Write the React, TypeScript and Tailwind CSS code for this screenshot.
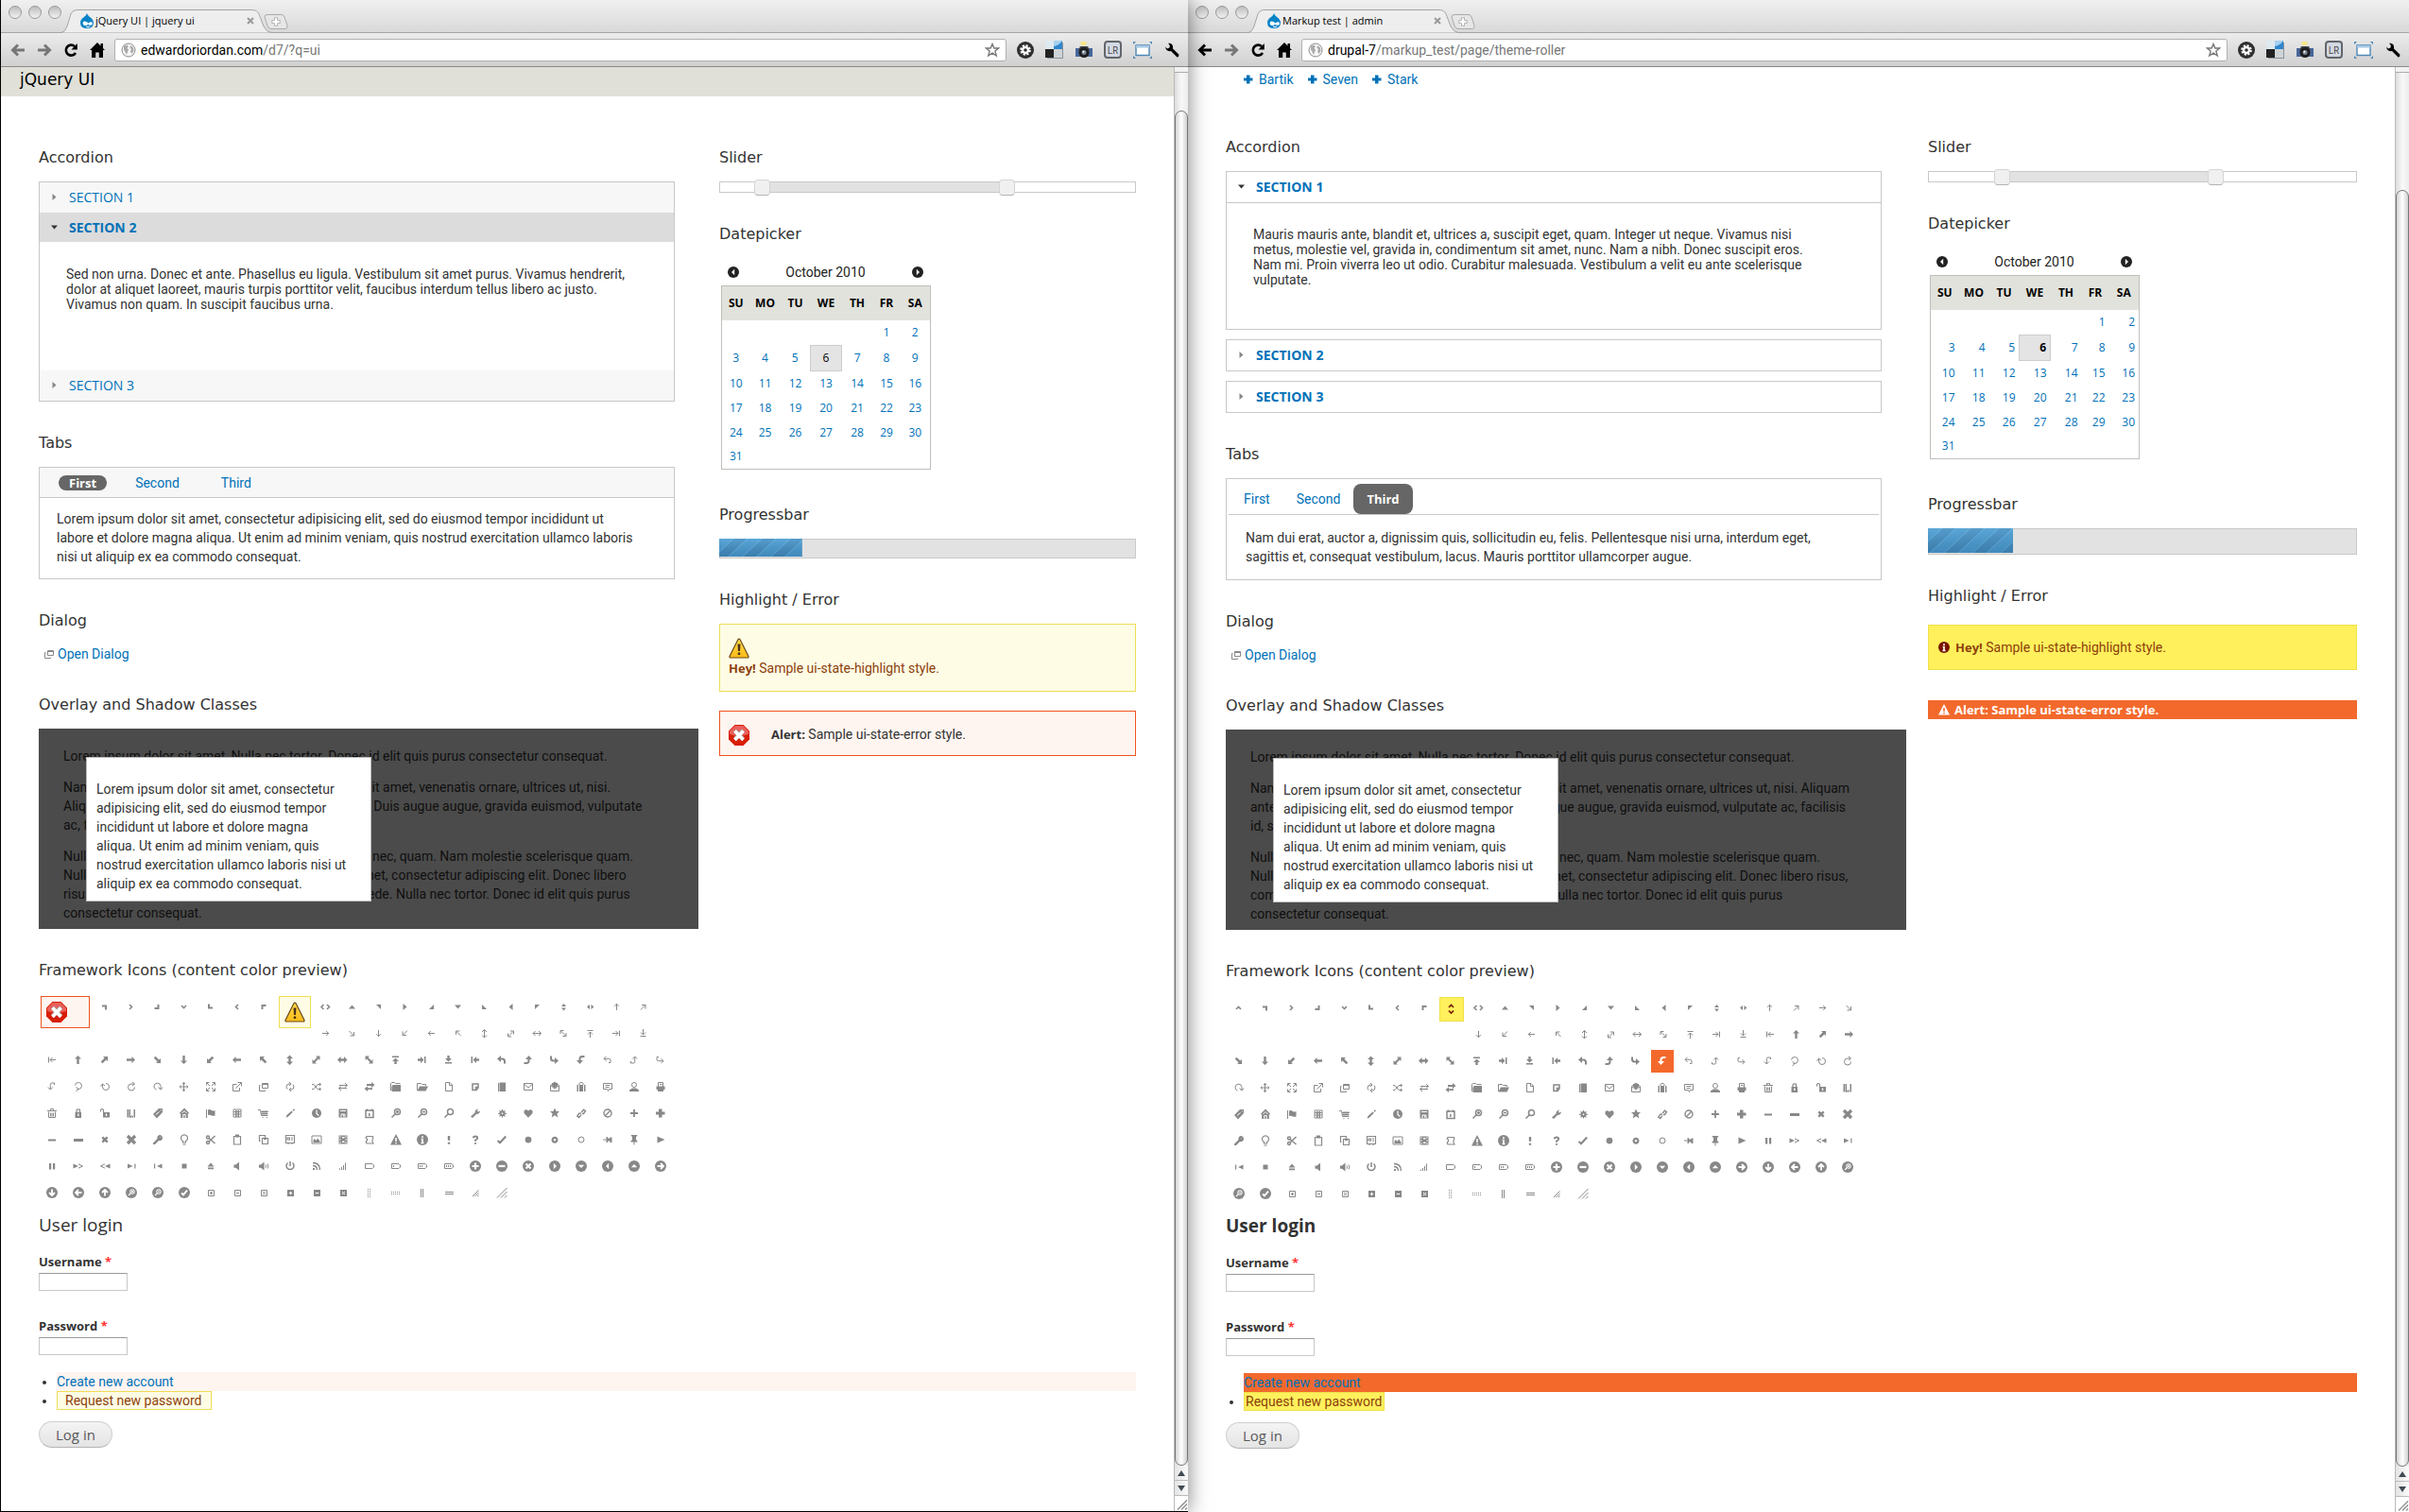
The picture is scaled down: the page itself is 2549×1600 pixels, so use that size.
import type { ReactNode } from "react";
import clsx from "clsx";

interface Glyph {
  fill?: string;
  line?: string;
  cut?: string;
  cutFill?: string;
  w?: number;
  turn?: number;
}

type Theme = "seven" | "bartik";

const NARROW = "font-['Open_Sans',sans-serif]";
const HEADING = "font-['DejaVu_Sans',sans-serif]";

const turns = (base: Glyph, angles: number[]): Glyph[] =>
  angles.map((turn) => ({ ...base, turn }));

// Straight and diagonal versions alternate clockwise from north
const compass = (straight: Glyph, diagonal: Glyph): Glyph[] =>
  [0, 90, 180, 270].flatMap((turn) => [
    { ...straight, turn },
    { ...diagonal, turn },
  ]);

const QUARTERS = [0, 90, 180, 270];
const DISC = "M8 2a6 6 0 1 0 0 12a6 6 0 1 0 0-12Z";

const CARAT: Glyph = { line: "M5 9L7.5 6.5L10 9", w: 1.6 };
const CARAT_NS: Glyph = { line: "M5 6L7.5 3.5L10 6M5 9.5L7.5 12L10 9.5", w: 1.6 };
const TRIANGLE: Glyph = { fill: "M4 9.5H11L7.5 5.5Z" };
const NEWWIN: Glyph = {
  line: "M6.5 4.5H12.5V9.5H6.5ZM6.5 5.5H12.5M4.5 6.5H3.5V12.5H9.5V11.5",
};
const RETURN_THICK: Glyph = {
  fill: "M3 6.5L7 3V5.5H8.5Q12 5.5 12 9V11.5H10V9.5Q10 7.5 8.5 7.5H7V10Z",
};
const PLUS_THICK: Glyph = { fill: "M6 3.5H9.5V6.5H12.5V9.5H9.5V12.5H6V9.5H3V6.5H6Z" };
const ALERT: Glyph = { fill: "M8 2L14 13.5H2Z", cut: "M8 6V10M8 11V12.3", w: 1.6 };
const INFO: Glyph = { fill: DISC, cut: "M8 4.2V6M6.7 7.5H8V11.5M6.5 11.5H9.5", w: 1.7 };
const DISC_EAST: Glyph = { fill: DISC, cutFill: "M6.8 4.8L10 8L6.8 11.2Z" };
const DISC_WEST: Glyph = { fill: DISC, cutFill: "M9.2 4.8L6 8L9.2 11.2Z" };

const GLYPHS: Glyph[] = [
  // carats
  ...compass(CARAT, { line: "M5 6.5H9V10.5", w: 2 }),
  CARAT_NS,
  { ...CARAT_NS, turn: 90 },
  // triangles
  ...compass(TRIANGLE, { fill: "M5 5H10V10Z" }),
  { fill: "M5 7L7.5 4L10 7ZM5 8.5H10L7.5 11.5Z" },
  { fill: "M7 5L4 7.5L7 10ZM8.5 5V10L11.5 7.5Z" },
  // arrows
  ...compass(
    { line: "M7.5 11V4M5 6.8L7.5 4.3L10 6.8" },
    { line: "M5 10.5L10 5.5M6 5.5H10V9.5" }
  ),
  { line: "M7.5 3.5V12M5 6L7.5 3.5L10 6M5 9.5L7.5 12L10 9.5" },
  { line: "M5 10.5L10 5.5M7 5H10.5V8.5M4.5 7.5V11H8" },
  { line: "M7.5 3.5V12M5 6L7.5 3.5L10 6M5 9.5L7.5 12L10 9.5", turn: 90 },
  { line: "M5 10.5L10 5.5M7 5H10.5V8.5M4.5 7.5V11H8", turn: 90 },
  ...turns({ line: "M4.5 4.5H10.5M7.5 12V6M5 8.5L7.5 6L10 8.5" }, QUARTERS),
  ...compass(
    { fill: "M7.5 3L11 6.5H8.7V12H6.3V6.5H4Z" },
    { fill: "M6 4H11V9L9.4 7.4L5.5 11.3L3.7 9.5L7.6 5.6Z" }
  ),
  { fill: "M7.5 2.5L11 6H8.7V9.5H11L7.5 13L4 9.5H6.3V6H4Z" },
  { fill: "M7 3.5H11.5V8L10 6.5L6.5 10L8 11.5H3.5V7L5 8.5L8.5 5Z" },
  { fill: "M7.5 2.5L11 6H8.7V9.5H11L7.5 13L4 9.5H6.3V6H4Z", turn: 90 },
  { fill: "M7 3.5H11.5V8L10 6.5L6.5 10L8 11.5H3.5V7L5 8.5L8.5 5Z", turn: 90 },
  ...turns({ fill: "M4 3.5H11V5H4ZM7.5 5.5L11 9H8.7V12H6.3V9H4Z" }, QUARTERS),
  ...turns(RETURN_THICK, QUARTERS),
  ...turns({ line: "M6.5 3.8L4 6.3L6.5 8.8M4.2 6.3H9.5Q11 6.3 11 8V10.5H9" }, QUARTERS),
  // refresh: partial rings with an arrow head
  { line: "M5.5 8L8 10.5L5.5 13M8 10.5H6.5M4.5 6.5A3.5 3.5 0 1 1 8 10.5" },
  { line: "M3.5 7.5L5.5 5L8 7M5.5 5V8A3.5 3.5 0 1 0 9 4.5" },
  { line: "M9 3L11.5 5L9 7M11 5H8A3.5 3.5 0 1 0 11.5 8.5" },
  { line: "M8.5 8.5L11 11L13 8.5M11 11V7.5A3.5 3.5 0 1 0 6.5 11" },
  // moving and windows
  {
    line: "M7.5 3.5V12.5M3 8H12M6 5L7.5 3.5L9 5M6 11L7.5 12.5L9 11M4.5 6.5L3 8L4.5 9.5M10.5 6.5L12 8L10.5 9.5",
  },
  {
    line: "M3.5 6.5V3.5H6.5M9.5 3.5H12.5V6.5M12.5 9.5V12.5H9.5M6.5 12.5H3.5V9.5M4 4L7 7M12 4L9 7M4 12L7 9M12 12L9 9",
  },
  { line: "M7.5 5.5H3.5V12.5H10.5V9M6.5 9.5L12 4M8.5 3.5H12.5V7.5" },
  NEWWIN,
  { line: "M7 3L9 5L7 7M9 5H7Q4 5 4 8.5L5 10.5M9 9L7 11L9 13M7 11H9Q12 11 12 8L11 5.5" },
  { line: "M3 5.5H5L9 10.5H12.5M3 10.5H5L9 5.5H12.5M11 4L12.5 5.5L11 7M11 9L12.5 10.5L11 12" },
  { line: "M4 6.5H12.5M10 4L12.5 6.5L10 8.5M12 9.5H3.5M6 7.5L3.5 9.5L6 12" },
  { fill: "M5 5H10V3L13.5 6L10 9V7H5ZM11 9.2V11H6V13L2.5 10L6 7.5V9.2Z" },
  // files and mail
  { line: "M2.5 12V4.5L3.5 3.5H6.5L7.5 4.5H12.5", fill: "M4.5 6H13V13H3.5V8Z" },
  { line: "M2.5 12V4.5H6.5L7.5 5.5H11.5V7", fill: "M5 7.5H14L11.5 12.5H2.5Z" },
  { line: "M4.5 3.5H9L11.5 6V12.5H4.5ZM8.5 4V6.5H11" },
  { line: "M5 5H11V9L9 11.5H5ZM8.5 11V8.5H11", w: 1.5 },
  { fill: "M5.5 3.5H12V13H5.5Z", line: "M4.5 4V13", w: 1 },
  { line: "M3.5 4.5H12.5V11.5H3.5ZM4 5.5L8 9L12 5.5" },
  { line: "M3.5 6.5V12.5H12.5V6.5L8 3ZM4 7L8 10L12 7", fill: "M5 4H11V7L8 9.5L5 7Z" },
  { line: "M6 6V4.5Q6 3.5 8 3.5Q10 3.5 10 4.5V6", fill: "M3.5 6H5V13H3.5ZM6 6H10V13H6ZM11 6H12.5V13H11Z" },
  { line: "M3.5 4.5H12.5V10.5H9.5L8.5 12.5L7.5 10.5H3.5ZM5.5 6.5H10.5M5.5 8.5H9.5" },
  { line: "M8 3.5A2.4 2.4 0 1 0 8 8.5A2.4 2.4 0 1 0 8 3.5", fill: "M3 13V11.5L6 9.5H10L13 11.5V13Z" },
  { line: "M5.5 8V3.5H10.5V8M7 5.5H9.5", fill: "M3.5 7.5H12.5V11H11V13H5V11H3.5Z" },
  { line: "M3 5.5H13M6.5 5V3.5H9.5V5M4.5 6.5V12.5H11.5V6.5M6.5 7.5V11.5M8 7.5V11.5M9.5 7.5V11.5" },
  { line: "M6 7V5Q6 3.8 7.8 3.8T9.5 5V7", fill: "M4.5 7H11V13H4.5Z", cut: "M7.8 8.5V11", w: 1.4 },
  { line: "M3.5 6.5V4.5Q5 2.5 6.5 4.5V7", fill: "M6 7H13V12.5H6Z", cut: "M9.5 8.5V11", w: 1.4 },
  { fill: "M3.5 4H5.5V12.5H3.5ZM10.5 4H12V12.5H10.5Z", line: "M6.5 4V12.5L8.5 10.5L10 12M7 12H10" },
  // objects
  { fill: "M3 9L9 3H13V7L7 13.5Z", cut: "M6 9.5L9.5 6.5M10.8 4.8H11.8", w: 1 },
  { fill: "M8 2.5L13.5 8.2H11.8V13H4.2V8.2H2.5Z", cut: "M5.5 8L8 5.5L10.5 8M6.8 13V9.5H9.2V13", w: 1 },
  { line: "M3.5 4V13", fill: "M5 4.5Q7 3.5 8.5 4.8T12.5 5V10.5Q10 11.2 8.5 10.3T5 10Z" },
  { line: "M4 4H12V12H4ZM4 6.5H12M4 9H12M6.5 5V12M9.5 5V12M8 5V12" },
  { line: "M2 4.5H4.5L5.5 10.5H12.5M5 6.5H13M5.3 8.5H12.5M7 5V10M9 5V10M11 5V10M6.5 12.5H7.5M11 12.5H12" },
  { fill: "M3.5 12.5L4.5 10L9.5 5.5L10.8 6.7L5.8 11.7ZM10.5 4.7L12 3.3L13 4.3L11.7 5.8Z" },
  { fill: "M8 3a5 5 0 1 0 0 10a5 5 0 1 0 0-10Z", cut: "M8 4.5V8.5L10.3 10.5", w: 1.2 },
  { fill: "M3.5 3.5H12.5V12.5H3.5Z", cut: "M5 5.5H11M6 12V9H10V12M8.5 9.5V11.5", w: 1 },
  { line: "M4 5H12V12.5H4ZM5.5 3.5V6M10.5 3.5V6M7.8 8V11", w: 1.5 },
  { line: "M9.5 3.5A3 3 0 1 0 9.5 9.5A3 3 0 1 0 9.5 3.5M7.3 8.7L3.5 12.5M8 6.5H11M9.5 5V8", w: 1.5 },
  { line: "M9.5 3.5A3 3 0 1 0 9.5 9.5A3 3 0 1 0 9.5 3.5M7.3 8.7L3.5 12.5M8 6.5H11", w: 1.5 },
  { line: "M9.5 3.5A3 3 0 1 0 9.5 9.5A3 3 0 1 0 9.5 3.5M7.3 8.7L3.5 12.5", w: 1.5 },
  { fill: "M3 11.5L7.5 7.5Q7.5 4 11 3.5L9.8 5.5L11 6.5L13 5.5Q12.5 9 9 9L5 13Z" },
  { line: "M8.5 4V12.5M4.2 8.3H12.8M5.5 5.3L11.5 11.3M11.5 5.3L5.5 11.3", fill: "M8.5 5.3a3 3 0 1 0 0 6a3 3 0 1 0 0-6Z", cut: "M7.7 8.3H9.3", w: 1.6 },
  { fill: "M8 12.8L3.5 8V5.5Q5.5 3 8 5.5Q10.5 3 12.5 5.5V8Z" },
  { fill: "M8 2.5L9.6 6H13L10.4 8.5L11.3 12.5L8 10.3L4.7 12.5L5.6 8.5L3 6H6.4Z" },
  { line: "M8.3 7L10.5 4.2L12.5 5.6L10.5 8.5L8.8 8.5M7.8 8L5.8 8.2L3.8 11L5.8 12.5L8 9.6", w: 1.4 },
  { line: "M8 4A4 4 0 1 0 8 12A4 4 0 1 0 8 4M5.5 10.5L10.5 5.5", w: 1.4 },
  { line: "M8 4V12M4 8H12", w: 1.8 },
  PLUS_THICK,
  { fill: "M4 7.5H12V9.5H4Z" },
  { fill: "M3 7H13V10H3Z" },
  { line: "M5.3 5.3L10.7 10.7M10.7 5.3L5.3 10.7", w: 2.4 },
  { line: "M4 4L12 12M12 4L4 12", w: 3.2 },
  { fill: "M10.5 3A3 3 0 0 0 7.5 7L3 11.5V13H5L9 9A3 3 0 0 0 13 6A3 3 0 0 0 10.5 3Z", cut: "M10.7 5.2L11 5.5", w: 1.2 },
  { line: "M6.5 9.5A3.5 3.5 0 1 1 9.5 9.5V11H6.5ZM6.5 13H9.5", w: 1.2 },
  { line: "M5 4A1.5 1.5 0 1 0 5 7A1.5 1.5 0 1 0 5 4M5 9.5A1.5 1.5 0 1 0 5 12.5A1.5 1.5 0 1 0 5 9.5M6.3 6.8L12.5 12M6.3 9.7L12.5 4", w: 1.5 },
  { line: "M4.5 4.5H11.5V13H4.5Z", fill: "M6 2.5H10V5.5H6Z", w: 1.2 },
  { line: "M4.5 9.5H3.5V3.5H9.5V5M6.5 6.5H12.5V12.5H6.5Z", fill: "M8 5.5H11V8H8Z", w: 1.2 },
  { line: "M3.5 3.5H12.5V11.5H3.5ZM5 6H7.5V8H5ZM9 6H11M9 8H11M6 12V13M10 12V13", w: 1.1 },
  { line: "M3 4H13V12H3Z", fill: "M4.5 11V8.5L6 7L7.5 9L9 6.5L11.5 9.5V11Z" },
  { fill: "M3.5 3.5H12.5V12.5H3.5Z", cut: "M4.5 5H5.5M4.5 8H5.5M4.5 11H5.5M10.5 5H11.5M10.5 8H11.5M10.5 11H11.5M7 5.8H9.5M7 10.2H9.5", w: 1.4 },
  { line: "M5 4.5H11.5Q12.5 6 11 8Q10.5 10 12 12H5Q3.5 10.5 5.5 8.5Q6 6.5 4 6Z", w: 1.2 },
  ALERT,
  INFO,
  { line: "M8 4V8.8M8 10.8V12.8", w: 2.4 },
  { line: "M5.8 6.2Q5.8 4.5 8 4.5T10.2 6.3Q10 7.5 8 8.5V9.7M8 11V12.8", w: 1.9 },
  { line: "M3.5 9L6 11.3L12.2 4.5", w: 2.1 },
  { fill: "M8 4.7a3.4 3.4 0 1 0 0 6.8a3.4 3.4 0 1 0 0-6.8Z" },
  { line: "M8 5.8A2.4 2.4 0 1 0 8 10.6A2.4 2.4 0 1 0 8 5.8", w: 2.2 },
  { line: "M8 5A3 3 0 1 0 8 11A3 3 0 1 0 8 5", w: 1 },
  { line: "M3 8H6.5", fill: "M6.5 5H8V6.5H10.5V5.5H12.5V11H10.5V9.5H8V11H6.5Z" },
  { line: "M8 10V13.5", fill: "M4.8 3H11.2V4.5H10V8L11.5 9.5V10.5H4.5V9.5L6 8V4.5H4.8Z" },
  // media
  { fill: "M4.5 4.5L12.5 8L4.5 11.5Z" },
  { fill: "M5 5H7.2V11.5H5ZM9 5H11.2V11.5H9Z" },
  { fill: "M2.5 5.5L8 8L2.5 10.5Z", line: "M8 5.8L12.5 8L8 10.2" },
  { fill: "M13.5 5.5L8 8L13.5 10.5Z", line: "M8 5.8L3.5 8L8 10.2" },
  { fill: "M4 5.5L9.5 8L4 10.5ZM11.3 5.5H12.5V10.5H11.3Z" },
  { fill: "M12.5 5.5L7 8L12.5 10.5ZM4 5.5H5.2V10.5H4Z" },
  { fill: "M5.5 5.5H10.5V10.5H5.5Z" },
  { fill: "M8 4.5L11.5 8.5H4.5ZM5 9.5H11V11.3H5Z" },
  { fill: "M4.5 6.5H6.5L10 3.5V12.5L6.5 9.8H4.5Z" },
  { fill: "M3 6.5H5L8.5 3.5V12.5L5 9.8H3Z", line: "M10 6.5Q11 8 10 9.8M12 5.5Q13.8 8 12 10.5" },
  { line: "M5.5 4.5A4 4 0 1 0 10.5 4.5M8 3V8", w: 1.5 },
  { line: "M4 4.5Q11.5 4.5 11.5 12M4 7.5Q8.5 7.5 8.5 12", fill: "M4 10H6V12H4Z", w: 1.3 },
  { line: "M4.5 10.5V12M6.5 9V12M8.5 7V12M10.5 4.5V12" },
  { line: "M3.5 5.5H11L12.5 7V9L11 10.5H3.5Z" },
  { line: "M3.5 5.5H11L12.5 7V9L11 10.5H3.5ZM5.5 7V9" },
  { line: "M3.5 5.5H11L12.5 7V9L11 10.5H3.5ZM5.5 7V9M7.5 7V9" },
  { line: "M3.5 5.5H11L12.5 7V9L11 10.5H3.5ZM5.5 7V9M7.5 7V9M9.5 7V9" },
  // discs
  { fill: DISC, cut: "M8 4.5V11.5M4.5 8H11.5", w: 2.2 },
  { fill: DISC, cut: "M4.5 8H11.5", w: 2.2 },
  { fill: DISC, cut: "M5.5 5.5L10.5 10.5M10.5 5.5L5.5 10.5", w: 2.2 },
  DISC_EAST,
  { fill: DISC, cutFill: "M4.8 6.8H11.2L8 10Z" },
  DISC_WEST,
  { fill: DISC, cutFill: "M4.8 9.2H11.2L8 6Z" },
  { fill: DISC, cut: "M4.5 8H10.5M8 5L11 8L8 11", w: 1.8 },
  { fill: DISC, cut: "M8 4.5V10.5M5 8L8 11L11 8", w: 1.8 },
  { fill: DISC, cut: "M11.5 8H5.5M8 5L5 8L8 11", w: 1.8 },
  { fill: DISC, cut: "M8 11.5V5.5M5 8L8 5L11 8", w: 1.8 },
  { fill: DISC, cut: "M9 4.8A2.2 2.2 0 1 0 9 9.2A2.2 2.2 0 1 0 9 4.8M7 9L5 11M8 7H10M9 6V8", w: 1.1 },
  { fill: DISC, cut: "M9 4.8A2.2 2.2 0 1 0 9 9.2A2.2 2.2 0 1 0 9 4.8M7 9L5 11M8 7H10", w: 1.1 },
  { fill: DISC, cut: "M5 8.5L7 10.3L11 5.7", w: 2 },
  { line: "M5.5 5.5H11.5V11.5H5.5ZM8.5 7V10M7 8.5H10" },
  { line: "M5.5 5.5H11.5V11.5H5.5ZM7 8.5H10" },
  { line: "M5.5 5.5H11.5V11.5H5.5ZM7 7L10 10M10 7L7 10" },
  { fill: "M5 5H12V12H5Z", cut: "M8.5 6.8V10.2M6.8 8.5H10.2" },
  { fill: "M5 5H12V12H5Z", cut: "M6.8 8.5H10.2" },
  { fill: "M5 5H12V12H5Z", cut: "M7 7L10 10M10 7L7 10" },
  // grips
  { fill: "M6 4h1v1h-1zM8 4h1v1h-1zM6 6h1v1h-1zM8 6h1v1h-1zM6 8h1v1h-1zM8 8h1v1h-1zM6 10h1v1h-1zM8 10h1v1h-1zM6 12h1v1h-1zM8 12h1v1h-1z" },
  { fill: "M3 7h1v1h-1zM3 9h1v1h-1zM5 7h1v1h-1zM5 9h1v1h-1zM7 7h1v1h-1zM7 9h1v1h-1zM9 7h1v1h-1zM9 9h1v1h-1zM11 7h1v1h-1zM11 9h1v1h-1z" },
  { line: "M6.5 4V13M8.5 4V13" },
  { line: "M4 7.5H13M4 9.5H13" },
  { line: "M5 12L11.5 5.5M7.5 12L11.5 8M10 12L11.5 10.5" },
  { line: "M3 13.5L13.5 3M7 13.5L13.5 7M11 13.5L13.5 11" },
];

const CARAT_NORTH_INDEX = 0;
const CARAT_NS_INDEX = 8;
const RETURN_SOUTH_INDEX = 55;

function Icon({ glyph, className }: { glyph: Glyph; className?: string }) {
  const width = glyph.w ?? 1;
  return (
    <svg viewBox="0 0 16 16" className={clsx("size-4 shrink-0", className)} aria-hidden="true">
      <g transform={glyph.turn ? `rotate(${glyph.turn} 7.5 7.5)` : undefined}>
        {glyph.fill && <path d={glyph.fill} fill="currentColor" />}
        {glyph.line && (
          <path d={glyph.line} fill="none" stroke="currentColor" strokeWidth={glyph.cut ? 1.2 : width} />
        )}
        {glyph.cut && <path d={glyph.cut} fill="none" stroke="#fff" strokeWidth={width} />}
        {glyph.cutFill && <path d={glyph.cutFill} fill="#fff" />}
      </g>
    </svg>
  );
}

function WarningSign() {
  return (
    <svg viewBox="0 0 22 22" className="size-[22px] shrink-0" aria-hidden="true">
      <defs>
        <linearGradient id="warn" x1="0" y1="0" x2="0" y2="1">
          <stop offset="0" stopColor="#ffdc4c" />
          <stop offset="1" stopColor="#fbb917" />
        </linearGradient>
      </defs>
      <path
        d="M11 1.2Q11.8 1.2 12.2 2L21 19.4Q21.3 21 20 21H2Q.7 21 1 19.4L9.8 2Q10.2 1.2 11 1.2Z"
        fill="url(#warn)"
        stroke="#6b4a1c"
        strokeWidth="1.2"
      />
      <path d="M9.5 6.5H12.5L12 14H10Z" fill="#4a3218" />
      <path d="M9.8 15.5H12.2V18H9.8Z" fill="#4a3218" />
    </svg>
  );
}

function StopSign() {
  return (
    <svg viewBox="0 0 22 22" className="size-[22px] shrink-0" aria-hidden="true">
      <path d="M6.5 0H15.5L22 6.5V15.5L15.5 22H6.5L0 15.5V6.5Z" fill="#d81e05" />
      <path d="M6.8 1H15.2L21 6.8V10Q11 13 1 10V6.8Z" fill="#e8605c" />
      <path d="M6.5 6L15.5 15.5M15.5 6L6.5 15.5" stroke="#a9a9a9" strokeWidth="4.6" />
      <path d="M6.5 6.5L15.5 16M15.5 6.5L6.5 16" stroke="#fff" strokeWidth="3.4" />
    </svg>
  );
}

function BrowserTab({ title }: { title: string }) {
  return (
    <div className="relative flex h-6 w-[222px] items-center self-end pl-[19px] pr-[18px]">
      <svg viewBox="0 0 224 25" preserveAspectRatio="none" className="absolute inset-x-0 top-0 h-[25px] w-full" aria-hidden="true">
        <path
          d="M0 24.5Q4 24 6 18L10 5Q12 .5 16 .5H204Q209 .5 211 5L216 18Q219 24 224 24.5"
          fill="#eeeeee"
          stroke="#a5a5a5"
        />
      </svg>
      <svg viewBox="0 0 16 16" className="relative size-4" aria-hidden="true">
        <path d="M8 0Q8.5 2 11 4Q15 6.5 15 10.5Q14.5 16 8 16Q1 16 1 10Q1 6.5 5 4Q7.5 2.5 8 0Z" fill="#0b84c6" />
        <path d="M5 8.5Q8 8.5 9.5 10.5Q12 8.5 13.5 9.5Q14.5 12.5 12 12.8Q10 12.8 9.3 11.8Q7 14 4.5 12.5Q2.5 10 5 8.5Z" fill="#fff" />
        <path d="M7 14Q9 15.2 11 14" stroke="#fff" fill="none" />
      </svg>
      <span className={clsx("relative flex-1 pl-px text-[11px] text-black", NARROW)}>{title}</span>
      <button type="button" aria-label="Close tab" className="relative text-[#999]">
        <svg viewBox="0 0 8 8" className="size-2" aria-hidden="true">
          <path d="M1 1L7 7M7 1L1 7" stroke="currentColor" strokeWidth="2" />
        </svg>
      </button>
    </div>
  );
}

function Toolbar({ host, path, canGoBack }: { host: string; path: string; canGoBack: boolean }) {
  const button = "flex w-7 justify-center";
  return (
    <div className="flex h-9 items-center border-b border-[#8a8a8a] bg-linear-to-b from-[#ececec] to-[#d0d0d0] pl-1 pr-0.5 text-black">
      <button type="button" aria-label="Back" className={clsx(button, canGoBack ? "text-black" : "text-[#777]")}>
        <svg viewBox="0 0 16 16" className="size-4" aria-hidden="true">
          <path d="M15 8H3M8 2.5L2.5 8L8 13.5" stroke="currentColor" strokeWidth="3" fill="none" />
        </svg>
      </button>
      <button type="button" aria-label="Forward" className={clsx(button, "text-[#777]")}>
        <svg viewBox="0 0 16 16" className="size-4" aria-hidden="true">
          <path d="M1 8H13M8 2.5L13.5 8L8 13.5" stroke="currentColor" strokeWidth="3" fill="none" />
        </svg>
      </button>
      <button type="button" aria-label="Reload" className={button}>
        <svg viewBox="0 0 16 16" className="size-4" aria-hidden="true">
          <path d="M13 11A5.5 5.5 0 1 1 12 4" stroke="currentColor" strokeWidth="2.6" fill="none" />
          <path d="M14.8 1V7.5H8.5Z" fill="currentColor" />
        </svg>
      </button>
      <button type="button" aria-label="Home" className={button}>
        <svg viewBox="0 0 16 16" className="size-4" aria-hidden="true">
          <path d="M8 0L11.5 3.5V1H14V6L16 8H14V16H9.8V10.5H6.2V16H2V8H0Z" fill="currentColor" />
        </svg>
      </button>
      <div className="ml-1 flex h-6 flex-1 items-center rounded-[3px] border border-[#b0b0b0] bg-white px-1.5">
        <svg viewBox="0 0 16 16" className="size-4" aria-hidden="true">
          <circle cx="8" cy="8" r="7" fill="#f6f6f6" stroke="#8a8a8a" />
          <path d="M3 4L6 2.5L8 4L6.5 6L8 7.5L7 10L6 13L4.5 10L3 7.5ZM10 3L13 5.5L13.5 9L11.5 12L10 9.5L11 7L9.5 5.5Z" fill="#a9a9a9" />
        </svg>
        <span className="flex-1 pl-[5px] text-[#777]">
          <span className="text-black">{host}</span>
          {path}
        </span>
        <button type="button" aria-label="Bookmark this page" className="text-[#777]">
          <svg viewBox="0 0 16 16" className="size-4" aria-hidden="true">
            <path d="M8 1.5L9.9 6H14.7L10.9 9L12.2 14L8 11.2L3.8 14L5.1 9L1.3 6H6.1Z" fill="none" stroke="currentColor" strokeWidth="1.4" />
          </svg>
        </button>
      </div>
      <div className="ml-1 flex *:flex *:w-[31px] *:items-center *:justify-center">
        <button type="button" aria-label="Settings">
          <svg viewBox="0 0 18 18" className="size-[18px]" aria-hidden="true">
            <circle cx="9" cy="9" r="9" fill="#2f2f2f" />
            <circle cx="9" cy="9" r="4.8" fill="none" stroke="#fff" strokeWidth="2" strokeDasharray="2.2 1.55" />
            <circle cx="9" cy="9" r="3" fill="none" stroke="#fff" strokeWidth="2.4" />
          </svg>
        </button>
        <button type="button" aria-label="Delicious">
          <svg viewBox="0 0 20 20" className="size-5" aria-hidden="true">
            <path d="M2 2H19V19H2Z" fill="#8d9399" />
            <path d="M0 0H9V9H0Z" fill="#dfe9f0" />
            <path d="M9 0H18V9H9Z" fill="#2f86cc" />
            <path d="M9 0H18Q15 5 9 6Z" fill="#a6d0ee" />
            <path d="M0 9H9V18H0Z" fill="#222" />
            <path d="M9 9H18V18H9Z" fill="#ced3d7" />
          </svg>
        </button>
        <button type="button" aria-label="Screenshot">
          <svg viewBox="0 0 20 18" className="h-[18px] w-5" aria-hidden="true">
            <path d="M6 0H13L12 4H7Z" fill="#f5e58a" />
            <path d="M1 7H19V16H1Z" fill="#48679c" />
            <path d="M6 5H14L16 9H4Z" fill="#42454c" />
            <circle cx="10" cy="11.5" r="5.5" fill="#1d1d1f" />
            <circle cx="10" cy="11.5" r="2.5" fill="#7d8894" />
            <circle cx="9.3" cy="10.8" r="1" fill="#fff" />
          </svg>
        </button>
        <button type="button" aria-label="LR">
          <span className={clsx("flex size-[19px] items-center justify-center rounded-sm border-2 border-[#62656b] bg-[#d3d9e2] text-[10px] leading-none text-[#444]", NARROW)}>
            LR
          </span>
        </button>
        <button type="button" aria-label="Resize window">
          <svg viewBox="0 0 20 18" className="h-[18px] w-5" aria-hidden="true">
            <path d="M3 4H17V14.5H3Z" fill="#fff" stroke="#4d87b6" strokeWidth="1.4" />
            <path d="M3 4H17V6.5H3Z" fill="#a5c7e4" />
            <path d="M0 3V0H3ZM17 0H20V3ZM0 15V18H3ZM20 15V18H17Z" fill="#4d87b6" />
          </svg>
        </button>
        <button type="button" aria-label="Customize">
          <svg viewBox="0 0 16 16" className="size-4" aria-hidden="true">
            <path d="M1 4.5L3 6.5L5.5 5.5L5.8 3L4 .8Q8 .3 9 4L9 6.5L15.2 12.5Q16 15 13.5 15.5L7 9Q2 10 1 4.5Z" fill="#000" />
          </svg>
        </button>
      </div>
    </div>
  );
}

function Scrollbar({ offset }: { offset: string }) {
  const arrow = "flex h-4 items-center justify-center border-b border-[#bbb] bg-linear-to-r from-[#e4e4e4] to-[#fafafa]";
  return (
    <div className="flex w-[15px] shrink-0 flex-col border-l border-[#b9b9b9] bg-linear-to-r from-[#dcdcdc] via-[#f8f8f8] to-[#ececec]">
      <div className="h-1.5 border-b border-[#aaa] bg-[#f2f2f2]" />
      <div className={clsx("flex-1 rounded-full border border-[#777] bg-linear-to-r from-[#d4d4d4] via-[#ffffff] to-[#d0d0d0]", offset)} />
      <button type="button" aria-label="Scroll up" className={arrow}>
        <svg viewBox="0 0 8 6" className="h-1.5 w-2" aria-hidden="true">
          <path d="M4 0L8 6H0Z" fill="#414a52" />
        </svg>
      </button>
      <button type="button" aria-label="Scroll down" className={arrow}>
        <svg viewBox="0 0 8 6" className="h-1.5 w-2" aria-hidden="true">
          <path d="M0 0H8L4 6Z" fill="#414a52" />
        </svg>
      </button>
      <div className="h-4 bg-white">
        <svg viewBox="0 0 14 16" className="h-4 w-3.5" aria-hidden="true">
          <path d="M3 14.5L13 4.5M7 14.5L13 8.5M11 14.5L13 12.5" stroke="#888" strokeWidth="1.2" />
        </svg>
      </div>
    </div>
  );
}

interface WindowProps {
  title: string;
  host: string;
  path: string;
  canGoBack?: boolean;
  thumbOffset: string;
  className?: string;
  children: ReactNode;
}

function BrowserWindow({ title, host, path, canGoBack = false, thumbOffset, className, children }: WindowProps) {
  return (
    <div className={clsx("flex min-w-0 flex-col bg-white", className)}>
      <div className="flex h-[35px] border-b border-[#a5a5a5] bg-linear-to-b from-[#f0f0f0] to-[#d9d9d9] pl-2">
        <div className="flex gap-[7px] pt-1.5">
          {["Close", "Minimize", "Zoom"].map((label) => (
            <button
              key={label}
              type="button"
              aria-label={label}
              className="size-3.5 rounded-full border border-[#999] bg-linear-to-b from-[#bdbdbd] to-[#f2f2f2]"
            />
          ))}
        </div>
        <BrowserTab title={title} />
        <button type="button" aria-label="New tab" className="-ml-2 mt-[15px] h-4 w-[26px]">
          <svg viewBox="0 0 26 16" className="h-4 w-[26px]" aria-hidden="true">
            <path d="M1 3Q1 .5 4 .5H19Q21 .5 22 3L25 12Q25.5 15.5 23 15.5H8Q5 15.5 4 12Z" fill="#e6e6e6" stroke="#aaa" />
            <path d="M13 3.5V12.5M8.5 8H17.5" stroke="#a5a5a5" strokeWidth="4" />
            <path d="M13 4.3V11.7M9.3 8H16.7" stroke="#fff" strokeWidth="2.4" />
          </svg>
        </button>
      </div>
      <Toolbar host={host} path={path} canGoBack={canGoBack} />
      <div className="flex flex-1">
        <main className="min-w-0 flex-1">{children}</main>
        <Scrollbar offset={thumbOffset} />
      </div>
    </div>
  );
}

function Section({ title, children, className }: { title: string; children: ReactNode; className?: string }) {
  return (
    <section className={className}>
      <h2 className={clsx("mb-[13px] pt-px text-base leading-6", HEADING)}>{title}</h2>
      {children}
    </section>
  );
}

function AccordionHeader({ label, open, className }: { label: string; open?: boolean; className?: string }) {
  return (
    <h3>
      <button
        type="button"
        aria-expanded={Boolean(open)}
        className={clsx("flex w-full items-center gap-[7px] pl-2 text-left text-[#0071b8]", NARROW, className)}
      >
        <Icon glyph={{ ...TRIANGLE, turn: open ? 180 : 90 }} className={open ? "text-[#333]" : "text-[#888]"} />
        {label}
      </button>
    </h3>
  );
}

interface SliderProps {
  low: number;
  high: number;
}

function RangeSlider({ low, high }: SliderProps) {
  const thumb =
    "pointer-events-none absolute -inset-x-px -top-[3px] h-[17px] w-[calc(100%+2px)] appearance-none bg-transparent [&::-webkit-slider-thumb]:pointer-events-auto [&::-webkit-slider-thumb]:size-[17px] [&::-webkit-slider-thumb]:appearance-none [&::-webkit-slider-thumb]:rounded-sm [&::-webkit-slider-thumb]:border [&::-webkit-slider-thumb]:border-[#d4d4d4] [&::-webkit-slider-thumb]:border-b-[#b4b4b4] [&::-webkit-slider-thumb]:bg-[#f0f0f0]";
  return (
    <div className="relative h-3 border border-[#c8c8c8]">
      <div className="absolute inset-y-0 bg-[#e2e2e2]" style={{ left: `${low / 10 + 1.5}%`, right: `${(1000 - high) / 10}%` }} />
      <input type="range" aria-label="Range start" min={0} max={1000} defaultValue={low} className={thumb} />
      <input type="range" aria-label="Range end" min={0} max={1000} defaultValue={high} className={thumb} />
    </div>
  );
}

const WEEKDAYS = ["SU", "MO", "TU", "WE", "TH", "FR", "SA"];
const WEEKS: (number | null)[][] = [
  [null, null, null, null, null, 1, 2],
  [3, 4, 5, 6, 7, 8, 9],
  [10, 11, 12, 13, 14, 15, 16],
  [17, 18, 19, 20, 21, 22, 23],
  [24, 25, 26, 27, 28, 29, 30],
  [31, null, null, null, null, null, null],
];

function Datepicker({ theme }: { theme: Theme }) {
  return (
    <div className="mb-1 ml-0.5 w-[221px]">
      <div className="flex h-[29px] items-center justify-between px-[5px] text-[#222]">
        <button type="button" aria-label="Previous month">
          <Icon glyph={DISC_WEST} />
        </button>
        <span>October 2010</span>
        <button type="button" aria-label="Next month">
          <Icon glyph={DISC_EAST} />
        </button>
      </div>
      <table className={clsx("w-full table-fixed border border-[#bfbfba] text-xs leading-5", NARROW)}>
        <colgroup>
          <col className="w-[30px]" />
          <col className="w-8" />
          <col className="w-8" />
          <col className="w-[33px]" />
          <col className="w-[33px]" />
          <col className="w-[29px]" />
          <col className="w-8" />
        </colgroup>
        <thead>
          <tr className="h-9 bg-[#e1e2dc] text-black">
            {WEEKDAYS.map((day) => (
              <th key={day} scope="col" className="p-0 text-center">
                {day}
              </th>
            ))}
          </tr>
        </thead>
        <tbody>
          {WEEKS.map((week, i) => (
            <tr key={i} className={i < 2 ? "h-[27px]" : "h-[26px]"}>
              {week.map((day, j) => (
                <td
                  key={j}
                  className={clsx(
                    "p-0",
                    theme === "seven" ? "text-center" : "pr-1 text-right",
                    day === 6 && "border border-[#cdcdcd] bg-[#e4e4e4]"
                  )}
                >
                  {day && (
                    <a
                      href={`#day-${day}`}
                      className={clsx(day === 6 ? "text-black" : "text-[#0071b8]", day === 6 && theme === "bartik" && "font-bold")}
                    >
                      {day}
                    </a>
                  )}
                </td>
              ))}
            </tr>
          ))}
        </tbody>
      </table>
    </div>
  );
}

function Progressbar({ theme }: { theme: Theme }) {
  return (
    <div
      role="progressbar"
      aria-label="Progress"
      aria-valuenow={20}
      aria-valuemin={0}
      aria-valuemax={100}
      className={clsx("border border-[#c9c9c9] bg-[#e2e2e2]", theme === "seven" ? "h-[21px]" : "h-7")}
    >
      <svg className="-ml-px -mt-px block h-full w-1/5" aria-hidden="true">
        <defs>
          <pattern id={`bar-${theme}`} width="30" height="28" patternUnits="userSpaceOnUse">
            <rect width="30" height="28" fill="#4a97cb" />
            <path d="M0 28L30 0H15L0 14ZM30 28V14L15 28Z" fill="#4388b8" />
            <path d="M0 28L30 0M0 14L15 0M15 28L30 14" stroke="#69b1de" fill="none" />
          </pattern>
          <linearGradient id={`shade-${theme}`} x1="0" y1="0" x2="0" y2="1">
            <stop offset="0" stopColor="#7cc4ee" stopOpacity=".35" />
            <stop offset="1" stopColor="#27628f" stopOpacity=".25" />
          </linearGradient>
        </defs>
        <rect width="100%" height="100%" fill={`url(#bar-${theme})`} />
        <rect width="100%" height="100%" fill={`url(#shade-${theme})`} />
      </svg>
    </div>
  );
}

function Lines({ lines }: { lines: string[] }) {
  return (
    <p className="whitespace-nowrap">
      {lines.map((line, i) => (
        <span key={i} className="block">
          {line}
        </span>
      ))}
    </p>
  );
}

const OVERLAY_TEXT: Record<Theme, string[][]> = {
  seven: [
    ["Lorem ipsum dolor sit amet, Nulla nec tortor. Donec id elit quis purus consectetur consequat."],
    [
      "Nam congue semper tellus. Sed erat dolor, dapibus sit amet, venenatis ornare, ultrices ut, nisi.",
      "Aliquam ante. Suspendisse scelerisque dui nec velit. Duis augue augue, gravida euismod, vulputate",
      "ac, facilisis id, sem. Morbi in orci.",
    ],
    [
      "Nulla purus lacus, pulvinar vel, malesuada ac, mattis nec, quam. Nam molestie scelerisque quam.",
      "Nullam feugiat cursus lacus.orem ipsum dolor sit amet, consectetur adipiscing elit. Donec libero",
      "risus, commodo vitae, pharetra mollis, posuere eu, pede. Nulla nec tortor. Donec id elit quis purus",
      "consectetur consequat.",
    ],
  ],
  bartik: [
    ["Lorem ipsum dolor sit amet, Nulla nec tortor. Donec id elit quis purus consectetur consequat."],
    [
      "Nam congue semper tellus. Sed erat dolor, dapibus sit amet, venenatis ornare, ultrices ut, nisi. Aliquam",
      "ante. Suspendisse scelerisque dui nec velit. Duis augue augue, gravida euismod, vulputate ac, facilisis",
      "id, sem. Morbi in orci.",
    ],
    [
      "Nulla purus lacus, pulvinar vel, malesuada ac, mattis nec, quam. Nam molestie scelerisque quam.",
      "Nullam feugiat cursus lacus.orem ipsum dolor sit amet, consectetur adipiscing elit. Donec libero risus,",
      "commodo vitae, pharetra mollis, posuere eu, pede. Nulla nec tortor. Donec id elit quis purus",
      "consectetur consequat.",
    ],
  ],
};

const DIALOG_TEXT = [
  "Lorem ipsum dolor sit amet, consectetur",
  "adipisicing elit, sed do eiusmod tempor",
  "incididunt ut labore et dolore magna",
  "aliqua. Ut enim ad minim veniam, quis",
  "nostrud exercitation ullamco laboris nisi ut",
  "aliquip ex ea commodo consequat.",
];

function OverlayDemo({ theme }: { theme: Theme }) {
  return (
    <div className="relative h-[212px] overflow-hidden bg-[#4b4b4b] pl-[26px] pt-[19px] text-[#0f0f0f]">
      <div className="flex flex-col gap-[13px]">
        {OVERLAY_TEXT[theme].map((lines, i) => (
          <Lines key={i} lines={lines} />
        ))}
      </div>
      <div className="absolute left-[50px] top-[30px] h-[153px] w-[302px] border border-[#bbb] bg-white pl-2.5 pt-[23px] text-[#333]">
        <Lines lines={DIALOG_TEXT} />
      </div>
    </div>
  );
}

function IconList({ theme }: { theme: Theme }) {
  return (
    <ul className="flow-root">
      {GLYPHS.map((glyph, i) => {
        if (theme === "seven" && i === CARAT_NORTH_INDEX) {
          return (
            <li key={i} className="float-left m-0.5 h-[34px] w-[52px] border border-[#ed541d] bg-[#fef5f1] p-[5px]">
              <StopSign />
            </li>
          );
        }
        if (theme === "seven" && i === CARAT_NS_INDEX) {
          return (
            <li key={i} className="float-left m-0.5 h-[34px] w-[34px] border border-[#ed5] bg-[#fffce5] p-[5px]">
              <WarningSign />
            </li>
          );
        }
        if (theme === "bartik" && i === CARAT_NS_INDEX) {
          return (
            <li key={i} className="float-left m-0.5 size-[26px] border border-[#f0e04a] bg-[#fff05c] p-1 text-[#7a1500]">
              <Icon glyph={glyph} />
            </li>
          );
        }
        const isError = theme === "bartik" && i === RETURN_SOUTH_INDEX;
        return (
          <li key={i} className={clsx("float-left m-0.5 size-6 p-1", isError ? "bg-[#f3692c] text-white" : "text-[#888]")}>
            <Icon glyph={glyph} />
          </li>
        );
      })}
    </ul>
  );
}

function LoginForm({ theme }: { theme: Theme }) {
  const seven = theme === "seven";
  const field = "mt-0.5 block h-[19px] w-[94px] border border-[#c8c8c8] border-t-[#999] bg-white px-1";
  return (
    <form className="mt-2">
      <h2 className={clsx("text-[19px] leading-6", NARROW, !seven && "font-bold")}>User login</h2>
      {["Username", "Password"].map((label, i) => (
        <div key={label} className={i === 0 ? "mt-[17px]" : "mt-[27px]"}>
          <label htmlFor={`${theme}-${label}`} className={clsx("block text-[13px] leading-5 font-bold", NARROW)}>
            {label} <span className="text-[#f33]">*</span>
          </label>
          <input id={`${theme}-${label}`} type={i === 0 ? "text" : "password"} className={field} />
        </div>
      ))}
      <ul className="mt-[18px] list-disc pl-[19px]">
        <li className={seven ? "bg-[#fef4f0]" : "list-none bg-[#f3692c]"}>
          <a href="#register" className="text-[#0071b8]">
            Create new account
          </a>
        </li>
        <li>
          <a
            href="#reset"
            className={clsx(
              "inline-block border align-top leading-[18px] text-[#8c3f0b]",
              seven ? "border-[#ed5] bg-[#fffce5] pl-2 pr-[9px]" : "border-[#f0e04a] bg-[#fff05c] px-px"
            )}
          >
            Request new password
          </a>
        </li>
      </ul>
      <button
        type="submit"
        className={clsx(
          "mt-3 h-7 rounded-full border border-[#cfcfcf] border-b-[#b4b4b4] bg-linear-to-b from-[#f4f4f4] to-[#e4e4e4] px-[17px] text-[15px] text-[#5a5a5a]",
          NARROW
        )}
      >
        Log in
      </button>
    </form>
  );
}

function OpenDialogLink() {
  return (
    <a href="#dialog" className="flex items-center gap-px pl-[3px] text-[#0071b8]">
      <Icon glyph={NEWWIN} className="text-[#888]" />
      Open Dialog
    </a>
  );
}

function SevenPage() {
  return (
    <>
      <header className={clsx("h-[31px] bg-[#e0e0d8] pl-5 text-[17px] leading-[26px] text-black", HEADING)}>jQuery UI</header>
      <div className="px-10 pt-[52px]">
        <div className="grid grid-cols-[698fr_441fr] gap-x-[22px]">
          <div className="flex flex-col gap-[31px]">
            <Section title="Accordion" className="mr-[25px]">
              <div className="border border-[#c8c8c8]">
                <AccordionHeader label="SECTION 1" className="h-8 bg-[#f7f7f7]" />
                <AccordionHeader label="SECTION 2" open className="h-[31px] bg-[#dcdcdc] font-bold" />
                <p className="h-[136px] pl-7 pt-[26px] leading-4">
                  Sed non urna. Donec et ante. Phasellus eu ligula. Vestibulum sit amet purus. Vivamus hendrerit,
                  <br />
                  dolor at aliquet laoreet, mauris turpis porttitor velit, faucibus interdum tellus libero ac justo.
                  <br />
                  Vivamus non quam. In suscipit faucibus urna.
                </p>
                <AccordionHeader label="SECTION 3" className="h-8 bg-[#f7f7f7]" />
              </div>
            </Section>
            <Section title="Tabs" className="mr-[25px]">
              <div className="border border-[#c8c8c8]">
                <div role="tablist" className="flex h-8 items-center border-b border-[#c8c8c8] bg-[#f7f7f7] pl-5">
                  <button type="button" role="tab" aria-selected="true" className={clsx("h-4 rounded-full bg-[#666] px-[11px] text-[13px] font-bold leading-4 text-white", NARROW)}>
                    First
                  </button>
                  <button type="button" role="tab" aria-selected="false" className="ml-[30px] text-[#0071b8]">
                    Second
                  </button>
                  <button type="button" role="tab" aria-selected="false" className="ml-11 text-[#0071b8]">
                    Third
                  </button>
                </div>
                <div className="pb-[13px] pl-[18px] pt-3">
                  <Lines
                    lines={[
                      "Lorem ipsum dolor sit amet, consectetur adipisicing elit, sed do eiusmod tempor incididunt ut",
                      "labore et dolore magna aliqua. Ut enim ad minim veniam, quis nostrud exercitation ullamco laboris",
                      "nisi ut aliquip ex ea commodo consequat.",
                    ]}
                  />
                </div>
              </div>
            </Section>
            <Section title="Dialog">
              <OpenDialogLink />
            </Section>
            <Section title="Overlay and Shadow Classes">
              <OverlayDemo theme="seven" />
            </Section>
            <Section title="Framework Icons (content color preview)" className="mr-[25px]">
              <IconList theme="seven" />
            </Section>
          </div>
          <div className="flex flex-col gap-[31px]">
            <Section title="Slider">
              <RangeSlider low={87} high={698} />
            </Section>
            <Section title="Datepicker">
              <Datepicker theme="seven" />
            </Section>
            <Section title="Progressbar">
              <Progressbar theme="seven" />
            </Section>
            <Section title="Highlight / Error">
              <div className="h-[72px] border border-[#ed5] bg-[#fffce5] pl-[9px] pt-3.5 text-[#8c3f0b]">
                <WarningSign />
                <p>
                  <strong className={clsx("text-[13px]", NARROW)}>Hey!</strong> Sample ui-state-highlight style.
                </p>
              </div>
              <div className="mt-5 flex h-12 border border-[#ed541d] bg-[#fef5f1] pl-[9px] pt-3.5">
                <StopSign />
                <p className="ml-[23px]">
                  <strong className={clsx("text-[13px]", NARROW)}>Alert:</strong> Sample ui-state-error style.
                </p>
              </div>
            </Section>
          </div>
        </div>
        <LoginForm theme="seven" />
      </div>
    </>
  );
}

function BartikPage() {
  return (
    <>
      <nav className="flex h-[26px] items-center gap-3 pl-14 text-[#0071b8]">
        {["Bartik", "Seven", "Stark"].map((name) => (
          <a key={name} href={`#${name}`} className="flex items-center gap-[3px]">
            <Icon glyph={PLUS_THICK} />
            {name}
          </a>
        ))}
      </nav>
      <div className="px-10 pt-[46px]">
        <div className="grid grid-cols-[720fr_454fr] gap-x-[23px]">
          <div className="flex flex-col gap-[31px]">
            <Section title="Accordion" className="mr-[26px]">
              <div className="flex flex-col gap-2.5">
                <div className="border border-[#c8c8c8]">
                  <AccordionHeader label="SECTION 1" open className="h-8 font-bold" />
                  <p className="h-[134px] border-t border-[#c8c8c8] pl-7 pt-[25px] leading-4">
                    Mauris mauris ante, blandit et, ultrices a, suscipit eget, quam. Integer ut neque. Vivamus nisi
                    <br />
                    metus, molestie vel, gravida in, condimentum sit amet, nunc. Nam a nibh. Donec suscipit eros.
                    <br />
                    Nam mi. Proin viverra leo ut odio. Curabitur malesuada. Vestibulum a velit eu ante scelerisque
                    <br />
                    vulputate.
                  </p>
                </div>
                <div className="border border-[#c8c8c8]">
                  <AccordionHeader label="SECTION 2" className="h-8 font-bold" />
                </div>
                <div className="border border-[#c8c8c8]">
                  <AccordionHeader label="SECTION 3" className="h-8 font-bold" />
                </div>
              </div>
            </Section>
            <Section title="Tabs" className="mr-[26px]">
              <div className="border border-[#c8c8c8] p-0.5">
                <div role="tablist" className="flex border-b border-[#c8c8c8] pl-0.5 pt-[3px] *:h-8 *:px-3.5">
                  <button type="button" role="tab" aria-selected="false" className="text-[#0071b8]">
                    First
                  </button>
                  <button type="button" role="tab" aria-selected="false" className="text-[#0071b8]">
                    Second
                  </button>
                  <button type="button" role="tab" aria-selected="true" className={clsx("rounded-lg bg-[#666] text-[13px] font-bold text-white", NARROW)}>
                    Third
                  </button>
                </div>
                <div className="pb-3 pl-[18px] pt-3.5">
                  <Lines
                    lines={[
                      "Nam dui erat, auctor a, dignissim quis, sollicitudin eu, felis. Pellentesque nisi urna, interdum eget,",
                      "sagittis et, consequat vestibulum, lacus. Mauris porttitor ullamcorper augue.",
                    ]}
                  />
                </div>
              </div>
            </Section>
            <Section title="Dialog">
              <OpenDialogLink />
            </Section>
            <Section title="Overlay and Shadow Classes">
              <OverlayDemo theme="bartik" />
            </Section>
            <Section title="Framework Icons (content color preview)" className="mr-[26px]">
              <IconList theme="bartik" />
            </Section>
          </div>
          <div className="flex flex-col gap-[31px]">
            <Section title="Slider">
              <RangeSlider low={160} high={677} />
            </Section>
            <Section title="Datepicker">
              <Datepicker theme="bartik" />
            </Section>
            <Section title="Progressbar">
              <Progressbar theme="bartik" />
            </Section>
            <Section title="Highlight / Error">
              <div className="mt-[18px] flex h-12 items-center border border-[#f0e04a] bg-[#fff05c] pl-2 text-[#8c3f0b]">
                <Icon glyph={INFO} className="text-[#7a1500]" />
                <p className="ml-1">
                  <strong className={clsx("text-[13px]", NARROW)}>Hey!</strong> Sample ui-state-highlight style.
                </p>
              </div>
              <div className={clsx("mt-8 flex items-center bg-[#f3692c] pl-[9px] text-[13px] leading-5 font-bold text-white", NARROW)}>
                <svg viewBox="0 0 16 16" className="size-4" aria-hidden="true">
                  <path d="M8 2L14 13.5H2Z" fill="#fff" />
                  <path d="M8 6V10M8 11V12.3" stroke="#f3692c" strokeWidth="1.6" />
                </svg>
                <p className="ml-[3px]">Alert: Sample ui-state-error style.</p>
              </div>
            </Section>
          </div>
        </div>
        <LoginForm theme="bartik" />
      </div>
    </>
  );
}

export default function App() {
  return (
    <div className="grid min-h-screen grid-cols-[1257fr_1292fr] bg-white font-['Roboto',sans-serif] text-sm leading-5 text-[#333]">
      <BrowserWindow
        title="jQuery UI | jquery ui"
        host="edwardoriordan.com"
        path="/d7/?q=ui"
        thumbOffset="mt-10"
        className="z-10 border-b border-l border-black shadow-[0_0_20px_rgba(0,0,0,0.5)]"
      >
        <SevenPage />
      </BrowserWindow>
      <BrowserWindow
        title="Markup test | admin"
        host="drupal-7"
        path="/markup_test/page/theme-roller"
        canGoBack
        thumbOffset="mt-[124px]"
      >
        <BartikPage />
      </BrowserWindow>
    </div>
  );
}
